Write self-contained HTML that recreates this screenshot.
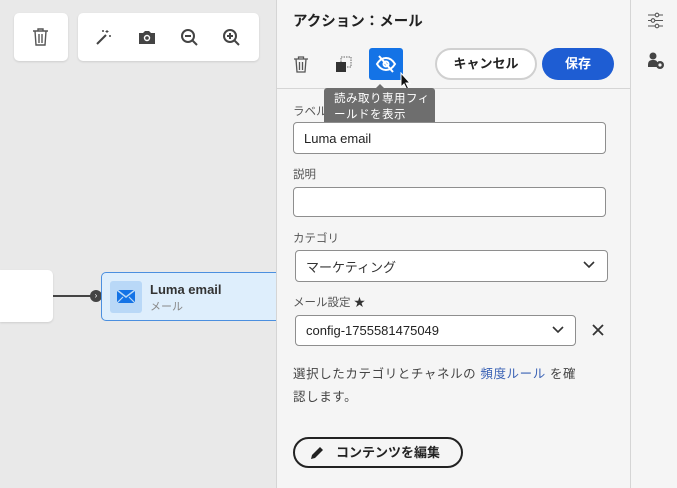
<!DOCTYPE html><html><head><meta charset="utf-8"><style>
*{box-sizing:border-box;margin:0;padding:0}
body{width:677px;height:488px;overflow:hidden;background:#e9e9e9;font-family:"Liberation Sans","Noto Sans CJK JP",sans-serif;position:relative;color:#222}
.a{position:absolute}
.card{background:#fff;border-radius:5px;box-shadow:0 1px 2px rgba(0,0,0,.12)}
.lbl{font-size:11.5px;color:#555}
.in{background:#fff;border:1px solid #8e8e8e;border-radius:4px;font-size:13px;padding-left:10px;display:flex;align-items:center}
</style></head><body>
<div class="a card" style="left:14px;top:13px;width:54px;height:48px"></div>
<svg class="a" style="left:32px;top:28px" width="17" height="18" viewBox="0 0 17 18" fill="none" stroke="#555" stroke-width="1.4"><path d="M1 3h15M6 3V1h5v2M3 3l1 14h9l1-14M7 6v9M10 6v9"/></svg>
<div class="a card" style="left:78px;top:13px;width:181px;height:48px"></div>
<svg class="a" style="left:95px;top:29px" width="18" height="17" viewBox="0 0 18 17"><path d="M2 15L11 6" stroke="#444" stroke-width="2"/><path d="M12 1v3M10.5 2.5h3M15 6v2M14 7h2M8 1v2M7 2h2" stroke="#444" stroke-width="1"/></svg>
<svg class="a" style="left:138px;top:29px" width="18" height="16" viewBox="0 0 18 16"><path d="M1 4h4l2-2h4l2 2h4v11H1z" fill="#444"/><circle cx="9" cy="9" r="3.2" fill="#fff"/><circle cx="9" cy="9" r="1.8" fill="#444"/></svg>
<svg class="a" style="left:180px;top:28px" width="19" height="19" viewBox="0 0 19 19" fill="none" stroke="#444" stroke-width="2"><circle cx="8" cy="8" r="6"/><path d="M12.5 12.5L17 17M5 8h6"/></svg>
<svg class="a" style="left:222px;top:28px" width="19" height="19" viewBox="0 0 19 19" fill="none" stroke="#444" stroke-width="2"><circle cx="8" cy="8" r="6"/><path d="M12.5 12.5L17 17M5 8h6M8 5v6"/></svg>
<div class="a card" style="left:0;top:270px;width:53px;height:52px;border-radius:0 5px 5px 0"></div>
<div class="a" style="left:53px;top:295px;width:42px;height:2px;background:#444"></div>
<div class="a" style="left:90px;top:290px;width:12px;height:12px;border-radius:50%;background:#444;color:#fff;font-size:8px;text-align:center;line-height:12px">›</div>
<div class="a" style="left:101px;top:272px;width:180px;height:49px;background:#deeefc;border:1px solid #4b8fdf;border-radius:5px"></div>
<div class="a" style="left:110px;top:281px;width:32px;height:32px;background:#b9d8f7;border-radius:3px"></div>
<svg class="a" style="left:117px;top:290px" width="18" height="13" viewBox="0 0 18 13"><rect width="18" height="13" fill="#1473e6"/><path d="M0 0l9 7 9-7" stroke="#b9d8f7" stroke-width="1.5" fill="none"/><path d="M0 13l6-6M18 13l-6-6" stroke="#b9d8f7" stroke-width="1.2"/></svg>
<div class="a" style="left:150px;top:282px;font-size:13px;font-weight:bold;color:#333">Luma email</div>
<div class="a" style="left:150px;top:298px;font-size:11px;color:#888">メール</div>
<div class="a" style="left:276px;top:0;width:355px;height:488px;background:#f5f5f5;border-left:1px solid #d5d5d5;border-right:1px solid #d5d5d5"></div>
<div class="a" style="left:631px;top:0;width:46px;height:488px;background:#f5f5f5"></div>
<svg class="a" style="left:647px;top:12px" width="17" height="17" viewBox="0 0 17 17" fill="none" stroke="#555" stroke-width="1.1"><path d="M1 3h15M1 8.5h15M1 14h15"/><circle cx="10" cy="3" r="1.8" fill="#f5f5f5"/><circle cx="6" cy="8.5" r="1.8" fill="#f5f5f5"/><circle cx="10" cy="14" r="1.8" fill="#f5f5f5"/></svg>
<svg class="a" style="left:647px;top:52px" width="18" height="18" viewBox="0 0 18 18"><circle cx="6" cy="4" r="3.5" fill="#444"/><path d="M1 13c0-4 2-5 5-5s4 1 4 2v5H1z" fill="#444"/><circle cx="13" cy="13" r="4" fill="#444"/><circle cx="13" cy="13" r="1.6" fill="#f5f5f5"/></svg>
<div class="a" style="left:293px;top:10px;font-size:14.5px;font-weight:bold;color:#222">アクション：メール</div>
<svg class="a" style="left:293px;top:56px" width="16" height="17" viewBox="0 0 16 17" fill="none" stroke="#555" stroke-width="1.3"><path d="M1 3h14M5.5 3V1h5v2M3 3l1 13h8l1-13M6.5 6v8M9.5 6v8"/></svg>
<svg class="a" style="left:335px;top:56px" width="17" height="17" viewBox="0 0 17 17"><rect x="6" y="1" width="10" height="10" fill="none" stroke="#666" stroke-dasharray="1.5 1"/><rect x="1" y="6" width="10" height="10" fill="#333"/></svg>
<div class="a" style="left:369px;top:48px;width:34px;height:32px;background:#1473e6;border-radius:3px"></div>
<svg class="a" style="left:375px;top:54px" width="22" height="20" viewBox="0 0 22 20" fill="none" stroke="#fff" stroke-width="2"><path d="M2 10c3-5 6-6 9-6s6 1 9 6c-3 5-6 6-9 6s-6-1-9-6z"/><circle cx="11" cy="10" r="2.5"/><path d="M4 2l14 16"/></svg>
<svg class="a" style="left:400px;top:72px" width="12" height="18" viewBox="0 0 12 18"><path d="M1 1v14l3-3 3 6 2-1-3-6h4z" fill="#111" stroke="#fff" stroke-width="1"/></svg>
<div class="a" style="left:435px;top:48px;width:102px;height:32px;border:2px solid #d0d0d0;border-radius:16px;background:#fff;font-size:13px;font-weight:bold;text-align:center;line-height:28px">キャンセル</div>
<div class="a" style="left:542px;top:48px;width:72px;height:32px;background:#1e5dd3;border-radius:16px;color:#fff;font-size:13px;font-weight:bold;text-align:center;line-height:32px">保存</div>
<div class="a" style="left:277px;top:88px;width:353px;height:1px;background:#d5d5d5"></div>
<div class="a lbl" style="left:293px;top:103px">ラベル</div>
<div class="a" style="left:324px;top:88px;width:111px;height:37px;background:#6e6e6e;border-radius:3px;color:#fff;font-size:11.5px;line-height:16px;padding:3px 0 0 10px;letter-spacing:.5px">読み取り専用フィ<br>ールドを表示</div>
<div class="a" style="left:376px;top:84px;width:0;height:0;border:4px solid transparent;border-bottom-color:#6e6e6e;border-top:0"></div>
<div class="a in" style="left:293px;top:122px;width:313px;height:32px">Luma email</div>
<div class="a lbl" style="left:293px;top:166px">説明</div>
<div class="a in" style="left:293px;top:187px;width:313px;height:30px"></div>
<div class="a lbl" style="left:293px;top:230px">カテゴリ</div>
<div class="a in" style="left:295px;top:250px;width:313px;height:32px;color:#333">マーケティング</div>
<svg class="a" style="left:583px;top:261px" width="12" height="8" viewBox="0 0 12 8"><path d="M1 1l5 5 5-5" stroke="#333" stroke-width="1.6" fill="none"/></svg>
<div class="a lbl" style="left:293px;top:294px">メール設定 <span style="color:#333">★</span></div>
<div class="a in" style="left:295px;top:315px;width:281px;height:31px">config-1755581475049</div>
<svg class="a" style="left:552px;top:326px" width="12" height="8" viewBox="0 0 12 8"><path d="M1 1l5 5 5-5" stroke="#333" stroke-width="1.6" fill="none"/></svg>
<svg class="a" style="left:592px;top:324px" width="12" height="12" viewBox="0 0 12 12"><path d="M1 1l10 10M11 1L1 11" stroke="#333" stroke-width="1.8"/></svg>
<div class="a" style="left:293px;top:363px;font-size:12.5px;line-height:23px;color:#444;letter-spacing:.6px;width:320px">選択したカテゴリとチャネルの <span style="color:#3a62b5">頻度ルール</span> を確<br>認します。</div>
<div class="a" style="left:293px;top:437px;width:170px;height:31px;border:2px solid #222;border-radius:16px;font-size:13px;font-weight:bold;line-height:27px;padding-left:41px">コンテンツを編集</div>
<svg class="a" style="left:310px;top:445px" width="15" height="15" viewBox="0 0 15 15"><path d="M1 14l1-4 8-8 3 3-8 8z" fill="#222"/></svg>
</body></html>
